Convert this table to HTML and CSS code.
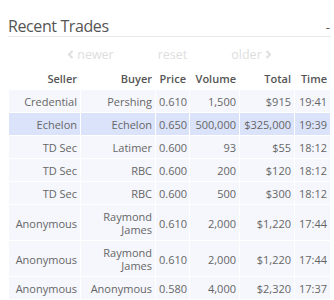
FILE: index.html
```html
<!DOCTYPE html>
<html>
<head>
<meta charset="utf-8">
<link rel="stylesheet" href="styles.css">
</head>
<body>
<div class="panel">
  <div class="panel-head">
    <h2 class="title">Recent Trades</h2>
    <span class="collapse">-</span>
  </div>
  <div class="pager">
    <span class="pager-item"><svg class="chev" width="7" height="9" viewBox="0 0 7 9"><path d="M5.5 1 L2 4.5 L5.5 8" fill="none" stroke="currentColor" stroke-width="2"/></svg>newer</span>
    <span class="pager-item">reset</span>
    <span class="pager-item">older<svg class="chev chev-r" width="7" height="9" viewBox="0 0 7 9"><path d="M1.5 1 L5 4.5 L1.5 8" fill="none" stroke="currentColor" stroke-width="2"/></svg></span>
  </div>
  <table class="trades">
    <thead>
      <tr>
        <th class="c-seller">Seller</th>
        <th class="c-buyer">Buyer</th>
        <th class="c-price">Price</th>
        <th class="c-volume">Volume</th>
        <th class="c-total">Total</th>
        <th class="c-time">Time</th>
      </tr>
    </thead>
    <tbody>
      <tr><td>Credential</td><td>Pershing</td><td>0.610</td><td>1,500</td><td>$915</td><td>19:41</td></tr>
      <tr class="hl"><td>Echelon</td><td>Echelon</td><td>0.650</td><td>500,000</td><td>$325,000</td><td>19:39</td></tr>
      <tr><td>TD Sec</td><td>Latimer</td><td>0.600</td><td>93</td><td>$55</td><td>18:12</td></tr>
      <tr><td>TD Sec</td><td>RBC</td><td>0.600</td><td>200</td><td>$120</td><td>18:12</td></tr>
      <tr><td>TD Sec</td><td>RBC</td><td>0.600</td><td>500</td><td>$300</td><td>18:12</td></tr>
      <tr><td>Anonymous</td><td>Raymond James</td><td>0.610</td><td>2,000</td><td>$1,220</td><td>17:44</td></tr>
      <tr><td>Anonymous</td><td>Raymond James</td><td>0.610</td><td>2,000</td><td>$1,220</td><td>17:44</td></tr>
      <tr><td>Anonymous</td><td>Anonymous</td><td>0.580</td><td>4,000</td><td>$2,320</td><td>17:37</td></tr>
      <tr class="tail"><td></td><td></td><td></td><td></td><td></td><td></td></tr>
    </tbody>
  </table>
</div>
</body>
</html>
```

FILE: styles.css
```css
html, body {
  margin: 0;
  padding: 0;
  background: #fff;
}
body {
  font-family: "Open Sans", "Noto Sans", sans-serif;
  color: #555;
  overflow: hidden;
}
.panel {
  padding: 16px 3px 0 8px;
}
.panel-head {
  display: flex;
  justify-content: space-between;
  align-items: flex-end;
  border-bottom: 1px solid #e8e8e8;
}
.title {
  margin: 0;
  font-size: 16px;
  letter-spacing: -0.4px;
  font-weight: 400;
  line-height: 20px;
  color: #555;
}
.collapse {
  font-size: 13px;
  line-height: 18px;
  color: #555;
  padding-right: 1px;
}
.pager {
  display: flex;
  justify-content: center;
  gap: 44px;
  height: 19px;
  margin-top: 8px;
  line-height: 19px;
  font-size: 12.5px;
  color: #dedede;
}
.pager-item {
  display: flex;
  align-items: center;
  gap: 3px;
}
.chev {
  display: block;
}
.trades {
  border-collapse: separate;
  border-spacing: 1px;
  table-layout: fixed;
  width: 323px;
  margin-top: 1px;
  font-size: 11px;
  line-height: 13px;
}
.trades th,
.trades td {
  text-align: right;
  padding: 5px 3px 4px 3px;
  box-sizing: border-box;
}
.trades th {
  font-weight: 600;
  color: #555;
  padding-top: 6px;
  padding-bottom: 4px;
}
.trades td {
  background: #f5f7fc;
  color: #666;
}
.trades tr.hl td {
  background: #dbe3fa;
}
.trades tr.tail td {
  height: 22px;
}
.c-seller { width: 71px; }
.c-buyer { width: 74px; }
.c-price { width: 33px; }
.c-volume { width: 49px; }
.c-total { width: 54px; }
.c-time { width: 35px; }
```
